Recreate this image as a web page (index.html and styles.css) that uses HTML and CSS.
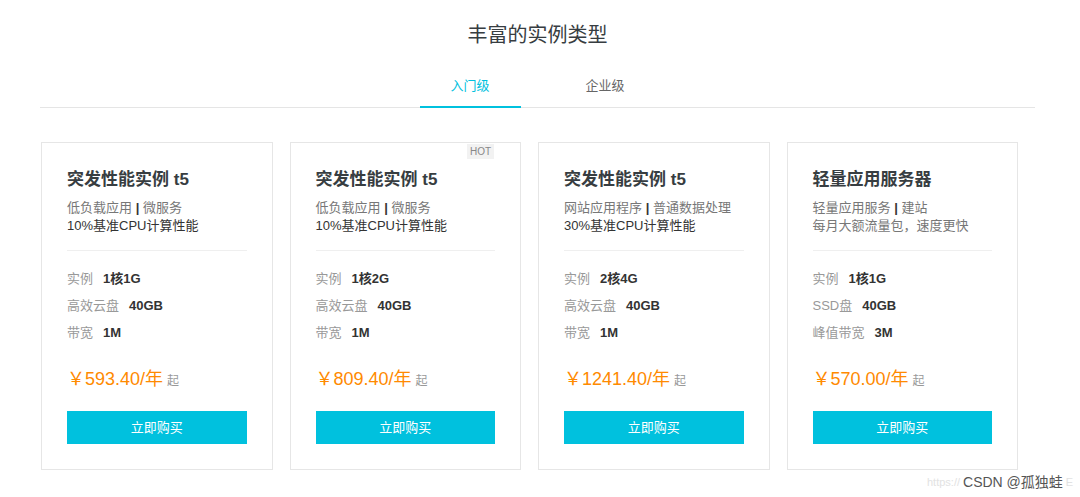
FILE: index.html
```html
<!DOCTYPE html>
<html lang="zh">
<head>
<meta charset="utf-8">
<title>丰富的实例类型</title>
<link rel="stylesheet" href="styles.css">
</head>
<body>
<div class="page">
  <h1 class="title">丰富的实例类型</h1>
  <div class="tabs">
    <div class="tab active">入门级</div>
    <div class="tab">企业级</div>
  </div>
  <div class="cards">
    <div class="card">
      <div class="card-title">突发性能实例 t5</div>
      <div class="desc"><div class="d1">低负载应用 <b>|</b> 微服务</div><div class="d2">10%基准CPU计算性能</div></div>
      <div class="sep"></div>
      <div class="specs">
        <div class="row"><span class="lbl">实例</span><span class="val">1核1G</span></div>
        <div class="row"><span class="lbl">高效云盘</span><span class="val">40GB</span></div>
        <div class="row"><span class="lbl">带宽</span><span class="val">1M</span></div>
      </div>
      <div class="price">￥593.40/年<span class="qi">起</span></div>
      <div class="btn">立即购买</div>
    </div>
    <div class="card">
      <span class="hot">HOT</span>
      <div class="card-title">突发性能实例 t5</div>
      <div class="desc"><div class="d1">低负载应用 <b>|</b> 微服务</div><div class="d2">10%基准CPU计算性能</div></div>
      <div class="sep"></div>
      <div class="specs">
        <div class="row"><span class="lbl">实例</span><span class="val">1核2G</span></div>
        <div class="row"><span class="lbl">高效云盘</span><span class="val">40GB</span></div>
        <div class="row"><span class="lbl">带宽</span><span class="val">1M</span></div>
      </div>
      <div class="price">￥809.40/年<span class="qi">起</span></div>
      <div class="btn">立即购买</div>
    </div>
    <div class="card">
      <div class="card-title">突发性能实例 t5</div>
      <div class="desc"><div class="d1">网站应用程序 <b>|</b> 普通数据处理</div><div class="d2">30%基准CPU计算性能</div></div>
      <div class="sep"></div>
      <div class="specs">
        <div class="row"><span class="lbl">实例</span><span class="val">2核4G</span></div>
        <div class="row"><span class="lbl">高效云盘</span><span class="val">40GB</span></div>
        <div class="row"><span class="lbl">带宽</span><span class="val">1M</span></div>
      </div>
      <div class="price">￥1241.40/年<span class="qi">起</span></div>
      <div class="btn">立即购买</div>
    </div>
    <div class="card">
      <div class="card-title">轻量应用服务器</div>
      <div class="desc"><div class="d1">轻量应用服务 <b>|</b> 建站</div><div class="d1">每月大额流量包，速度更快</div></div>
      <div class="sep"></div>
      <div class="specs">
        <div class="row"><span class="lbl">实例</span><span class="val">1核1G</span></div>
        <div class="row"><span class="lbl">SSD盘</span><span class="val">40GB</span></div>
        <div class="row"><span class="lbl">峰值带宽</span><span class="val">3M</span></div>
      </div>
      <div class="price">￥570.00/年<span class="qi">起</span></div>
      <div class="btn">立即购买</div>
    </div>
  </div>
</div>
<div class="watermark"><span class="wm-url">https://</span><span class="wm-name">CSDN @孤独蛙</span><span class="wm-tail">E</span></div>
</body>
</html>
```

FILE: styles.css
```css
* { box-sizing: border-box; }
html, body { margin: 0; padding: 0; background: #fff; }
body {
  font-family: "Liberation Sans", "Noto Sans CJK SC", sans-serif;
  color: #333;
  height: 497px;
  overflow: hidden;
  position: relative;
}
.page {
  width: 995px;
  margin-left: 40px;
  padding-top: 21px;
}
.title {
  margin: 0;
  font-size: 20px;
  line-height: 28px;
  font-weight: normal;
  text-align: center;
  color: #373d41;
}
.tabs {
  margin-top: 18px;
  display: flex;
  justify-content: center;
  gap: 34px;
  border-bottom: 1px solid #e5e5e5;
}
.tab {
  width: 101px;
  height: 41px;
  line-height: 38px;
  text-align: center;
  font-size: 13px;
  color: #666;
  border-bottom: 2px solid transparent;
  margin-bottom: -1px;
}
.tab.active {
  color: #00c1de;
  border-bottom-color: #00c1de;
}
.cards {
  margin-top: 34px;
  padding-left: 1px;
  padding-right: 17px;
  display: grid;
  grid-template-columns: repeat(4, 1fr);
  gap: 17px;
}
.card {
  position: relative;
  border: 1px solid #e6e6e6;
  padding: 25px 25px 25px;
}
.hot {
  position: absolute;
  top: 1px;
  right: 26px;
  width: 27px;
  height: 15px;
  line-height: 15px;
  text-align: center;
  font-size: 10px;
  color: #888;
  background: #f2f2f2;
}
.card-title {
  font-size: 17px;
  line-height: 24px;
  font-weight: bold;
  color: #373d41;
}
.desc {
  margin-top: 7px;
  font-size: 13px;
  line-height: 18px;
}
.d1 { color: #777; }
.d1 b { color: #333; font-weight: bold; }
.d2 { color: #333; }
.sep {
  margin-top: 15px;
  height: 1px;
  background: #efefef;
}
.specs {
  margin-top: 14px;
}
.row {
  font-size: 13px;
  line-height: 27px;
}
.lbl { color: #999; margin-right: 10px; }
.val { color: #333; font-weight: bold; }
.price {
  margin-top: 21px;
  font-size: 18px;
  line-height: 24px;
  color: #ff8a00;
}
.qi {
  font-size: 12px;
  color: #999;
  margin-left: 4px;
}
.btn {
  margin-top: 18px;
  height: 33px;
  line-height: 33px;
  background: #00c1de;
  color: #fff;
  text-align: center;
  font-size: 13px;
}
.watermark {
  position: absolute;
  left: 927px;
  top: 472px;
  height: 20px;
  display: flex;
  align-items: center;
  gap: 3px;
  white-space: nowrap;
}
.wm-url, .wm-tail {
  font-size: 11px;
  color: #e2e2e2;
}
.wm-name {
  font-size: 14px;
  line-height: 18px;
  color: #555;
}
```
